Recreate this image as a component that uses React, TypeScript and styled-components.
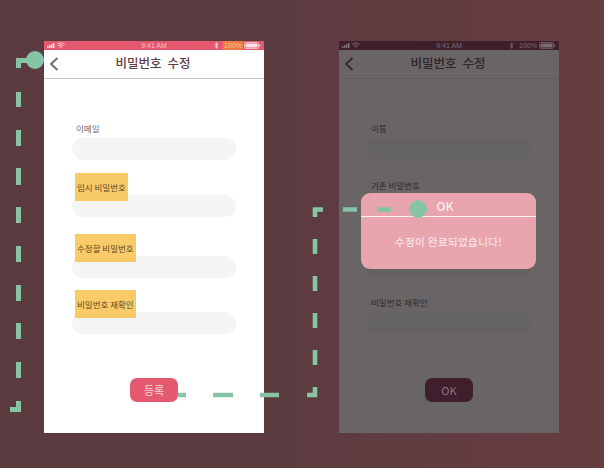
import React from "react";
import styled, { createGlobalStyle } from "styled-components";

const font = `"Noto Sans CJK KR", "Noto Sans", "Liberation Sans", sans-serif`;

const GlobalStyle = createGlobalStyle`
  html, body {
    margin: 0;
    padding: 0;
    background: #5e3b40;
  }
`;

const Canvas = styled.div`
  position: relative;
  width: 604px;
  height: 468px;
  overflow: hidden;
  font-family: ${font};
  background: linear-gradient(90deg, #5c3b40 0%, #5c3b40 48%, #663d41 100%);
`;

const Screen = styled.div<{ $left: number; $dim?: boolean }>`
  position: absolute;
  left: ${(p) => p.$left}px;
  top: 41px;
  width: 220px;
  height: 392px;
  display: flex;
  flex-direction: column;
  background: ${(p) => (p.$dim ? "#696466" : "#ffffff")};
`;

const StatusBar = styled.div<{ $dim?: boolean }>`
  height: 9px;
  flex: none;
  display: grid;
  grid-template-columns: 1fr auto 1fr;
  align-items: center;
  padding: 0 3px;
  background: ${(p) => (p.$dim ? "#3f1f2c" : "#e4596f")};
  color: ${(p) => (p.$dim ? "#7d6a72" : "#f7c2ca")};
  font-family: "Liberation Sans", sans-serif;
  font-size: 7px;
  line-height: 9px;
`;

const StatusLeft = styled.div`
  display: flex;
  align-items: center;
`;

const StatusRight = styled.div`
  display: flex;
  align-items: center;
  justify-content: flex-end;
  gap: 1px;
`;

const Percent = styled.span<{ $dim?: boolean }>`
  padding: 0 1px;
  background: ${(p) => (p.$dim ? "transparent" : "#ee7a45")};
  color: ${(p) => (p.$dim ? "#7d6a72" : "#f9c38c")};
`;

const Header = styled.header<{ $dim?: boolean }>`
  position: relative;
  height: 29px;
  flex: none;
  display: flex;
  align-items: center;
  justify-content: center;
  box-sizing: border-box;
  padding: 0 2px 4px 0;
  border-bottom: 1px solid ${(p) => (p.$dim ? "#5f5a5c" : "#c9c7c8")};
  color: ${(p) => (p.$dim ? "#2f2529" : "#5f3d44")};
  font-size: 12.5px;
  font-weight: 500;
  word-spacing: 3px;
`;

const Back = styled.svg`
  position: absolute;
  left: 5px;
  top: 7px;
`;

const Form = styled.div`
  flex: 1;
  display: flex;
  flex-direction: column;
  align-items: center;
  padding-top: 45px;
`;

const FieldGroup = styled.div<{ $top: number }>`
  position: relative;
  width: 164px;
  margin-top: ${(p) => p.$top}px;
`;

const FieldLabel = styled.div<{ $dim?: boolean }>`
  height: 14px;
  padding-left: 4px;
  font-size: 8.5px;
  line-height: 9px;
  color: ${(p) => (p.$dim ? "#2e2a2c" : "#6a6568")};
`;

const Input = styled.div<{ $dim?: boolean }>`
  height: 21.5px;
  border-radius: 11px;
  background: ${(p) => (p.$dim ? "#656264" : "#f5f5f5")};
`;

const Sticky = styled.div<{ $width: number }>`
  position: absolute;
  left: 3px;
  bottom: 16px;
  width: ${(p) => p.$width}px;
  height: 28px;
  padding-left: 2px;
  box-sizing: border-box;
  background: rgba(247, 196, 88, 0.9);
  color: #5c4a28;
  font-size: 8.5px;
  line-height: 28px;
  white-space: nowrap;
`;

const SubmitButton = styled.button<{ $dim?: boolean }>`
  width: 48px;
  height: 24px;
  margin-top: 44.5px;
  padding: 0;
  border: none;
  border-radius: 7px;
  background: ${(p) => (p.$dim ? "#3f1f2c" : "#e4596f")};
  color: ${(p) => (p.$dim ? "#8b7a80" : "#f9d5da")};
  font-family: ${font};
  font-size: 11px;
`;

const Dialog = styled.div`
  position: absolute;
  left: 361px;
  top: 193px;
  width: 175px;
  height: 76px;
  display: flex;
  flex-direction: column;
  border-radius: 9px;
  background: #e8a5ae;
  color: #fbeef0;
`;

const DialogTitle = styled.div`
  height: 24px;
  padding-right: 7px;
  box-sizing: border-box;
  border-bottom: 1px solid #fbeef0;
  text-align: center;
  font-size: 12px;
  font-weight: 500;
  line-height: 25px;
`;

const DialogBody = styled.div`
  flex: 1;
  display: flex;
  align-items: center;
  justify-content: center;
  padding-bottom: 3px;
  font-size: 10.5px;
  letter-spacing: 0.4px;
`;

const Links = styled.svg`
  position: absolute;
  left: 0;
  top: 0;
  pointer-events: none;
`;

const BluetoothIcon = styled.svg`
  margin-right: 3px;
`;

function StatusIcons({ dim }: { dim?: boolean }) {
  const c = dim ? "#7d6a72" : "#fbe3e6";
  return (
    <svg width="21" height="7" viewBox="0 0 21 7">
      <rect x="0" y="4" width="1.5" height="2" fill={c} />
      <rect x="2" y="3" width="1.5" height="3" fill={c} />
      <rect x="4" y="2" width="1.5" height="4" fill={c} />
      <rect x="6" y="1" width="1.5" height="5" fill={c} />
      <path d="M10 2.4a6 6 0 0 1 7.6 0M11.2 3.8a4 4 0 0 1 5.2 0M12.6 5.2a2 2 0 0 1 2.4 0" fill="none" stroke={c} strokeWidth="0.9" />
    </svg>
  );
}

function Battery({ dim }: { dim?: boolean }) {
  const c = dim ? "#7d6a72" : "#fbe3e6";
  return (
    <svg width="17" height="7" viewBox="0 0 17 7">
      <rect x="0.5" y="0.5" width="14" height="6" rx="1.2" fill="none" stroke={c} strokeWidth="0.7" />
      <rect x="1.5" y="1.5" width="12" height="4" fill={c} />
      <rect x="15.3" y="2.4" width="1" height="2.2" fill={c} />
    </svg>
  );
}

function Bluetooth({ dim }: { dim?: boolean }) {
  const c = dim ? "#7d6a72" : "#fbe3e6";
  return (
    <BluetoothIcon width="5" height="7" viewBox="0 0 5 7">
      <path d="M0.6 1.8 4 4.8 2.4 6.4V0.6L4 2.2 0.6 5.2" fill="none" stroke={c} strokeWidth="0.7" />
    </BluetoothIcon>
  );
}

function PhoneTop({ dim }: { dim?: boolean }) {
  return (
    <>
      <StatusBar $dim={dim}>
        <StatusLeft>
          <StatusIcons dim={dim} />
        </StatusLeft>
        <span>9:41 AM</span>
        <StatusRight>
          <Bluetooth dim={dim} />
          <Percent $dim={dim}>100%</Percent>
          <Battery dim={dim} />
        </StatusRight>
      </StatusBar>
      <Header $dim={dim}>
        <Back width="10" height="14" viewBox="0 0 10 14">
          <path d="M8.5 1 2 7l6.5 6" fill="none" stroke={dim ? "#2f2b2d" : "#6b686a"} strokeWidth="1.8" />
        </Back>
        비밀번호 수정
      </Header>
    </>
  );
}

const firstFields = [
  { top: 0, label: "이메일" },
  { top: 21.5, label: "임시 비밀번호", sticky: 53 },
  { top: 25.5, label: "수정할 비밀번호", sticky: 61 },
  { top: 20.5, label: "비밀번호 재확인", sticky: 61 },
];

const secondFields = [
  { top: 0, label: "이름" },
  { top: 21.5, label: "기존 비밀번호" },
  { top: 25.5, label: "" },
  { top: 20.5, label: "비밀번호 재확인" },
];

export default function App() {
  return (
    <Canvas>
      <GlobalStyle />
      <Screen $left={44}>
        <PhoneTop />
        <Form>
          {firstFields.map((f) => (
            <FieldGroup key={f.label} $top={f.top}>
              {f.sticky ? <FieldLabel /> : <FieldLabel>{f.label}</FieldLabel>}
              <Input />
              {f.sticky && <Sticky $width={f.sticky}>{f.label}</Sticky>}
            </FieldGroup>
          ))}
          <SubmitButton>등록</SubmitButton>
        </Form>
      </Screen>

      <Screen $left={339} $dim>
        <PhoneTop dim />
        <Form>
          {secondFields.map((f, i) => (
            <FieldGroup key={i} $top={f.top}>
              <FieldLabel $dim>{f.label}</FieldLabel>
              <Input $dim />
            </FieldGroup>
          ))}
          <SubmitButton $dim>OK</SubmitButton>
        </Form>
      </Screen>

      <Dialog>
        <DialogTitle>OK</DialogTitle>
        <DialogBody>수정이 완료되었습니다!</DialogBody>
      </Dialog>

      <Links width="604" height="468" viewBox="0 0 604 468">
        <g fill="none" stroke="#87c4a5" strokeWidth="4.6">
          <path d="M178 395H186M213 395H233M260 395H279M307 395H315V387" />
          <path d="M315 365V350M315 328V313M315 291V276M315 254V239M315 217V209.5H323" />
          <path d="M343 209.5H357M377 209.5H391" />
        </g>
        <g fill="none" stroke="#87c4a5" strokeWidth="5">
          <path d="M18.5 68V60.5H35" />
          <path d="M18.5 92V107M18.5 130V146M18.5 168V185M18.5 207V223M18.5 246V262M18.5 285V301M18.5 323V339M18.5 362V378M18.5 401V409.5H10" />
        </g>
        <circle cx="35" cy="60" r="9" fill="#87c4a5" />
        <circle cx="418" cy="209" r="9" fill="#87c4a5" />
      </Links>
    </Canvas>
  );
}
